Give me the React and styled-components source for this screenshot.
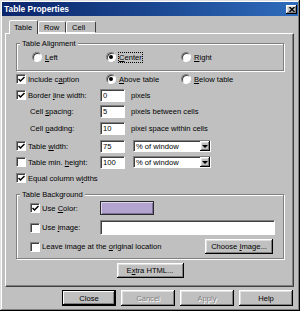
import React from "react";
import styled, { createGlobalStyle, css } from "styled-components";

const GlobalStyle = createGlobalStyle`
  html, body {
    margin: 0;
    padding: 0;
    background: #c0c0c0;
  }
  body {
    font-family: "Liberation Sans", Arial, sans-serif;
    font-size: 7.6px;
    color: #000;
  }
`;

const raised = css`
  box-shadow: inset -1px -1px 0 #000, inset 1px 1px 0 #fff,
    inset -2px -2px 0 #808080, inset 2px 2px 0 #dfdfdf;
`;

const sunken = css`
  border: 1px solid;
  border-color: #808080 #fff #fff #808080;
  box-shadow: inset 1px 1px 0 #404040;
  background: #fff;
`;

const Window = styled.div`
  width: 300px;
  height: 311px;
  box-sizing: border-box;
  padding: 2px;
  background: #c0c0c0;
  box-shadow: inset -1px -1px 0 #000, inset 1px 1px 0 #dfdfdf,
    inset -2px -2px 0 #808080, inset 2px 2px 0 #fff;
  display: flex;
  flex-direction: column;
`;

const TitleBar = styled.div`
  height: 14px;
  display: flex;
  align-items: center;
  justify-content: space-between;
  padding: 0 1px 0 2px;
  background: linear-gradient(90deg, #0a246a 0%, #1c4a94 55%, #2f6cbc 100%);
  color: #fff;
  font-weight: bold;
  font-size: 8.4px;
`;

const CloseBtn = styled.div`
  width: 11px;
  height: 9px;
  background: #c0c0c0;
  ${raised};
  display: flex;
  align-items: center;
  justify-content: center;
`;

const Body = styled.div`
  padding: 3px 4px 0 3px;
  display: flex;
  flex-direction: column;
`;

const Tabs = styled.div`
  display: flex;
  align-items: flex-end;
  height: 14px;
  padding-left: 4px;
  position: relative;
  z-index: 1;
`;

const Tab = styled.div`
  width: ${(p) => p.$w}px;
  height: ${(p) => (p.$active ? 14 : 12)}px;
  box-sizing: border-box;
  border: 1px solid;
  border-bottom: none;
  border-color: #fff #404040 transparent #fff;
  border-radius: 2px 2px 0 0;
  background: #c0c0c0;
  padding: ${(p) => (p.$active ? "2px 0 0 4px" : "1px 0 0 5px")};
  margin-bottom: ${(p) => (p.$active ? -1 : 0)}px;
  ${(p) =>
    !p.$active &&
    css`
      border-bottom: 1px solid #fff;
    `}
`;

const Panel = styled.div`
  height: 254px;
  box-sizing: border-box;
  border: 1px solid;
  border-color: #fff #404040 #404040 #fff;
  box-shadow: inset -1px -1px 0 #808080;
  padding: 3px 9px 0 10px;
  display: flex;
  flex-direction: column;
`;

const Group = styled.fieldset`
  margin: ${(p) => p.$mt || 0}px 0 0 0;
  padding: 0 0 ${(p) => p.$pb || 0}px 0;
  width: 268px;
  box-sizing: border-box;
  min-width: 0;
  border: 1px solid #808080;
  box-shadow: 1px 1px 0 #fff, inset 1px 1px 0 #fff;
`;

const Legend = styled.legend`
  margin-left: 3px;
  padding: 0 2px;
  line-height: 13px;
  background: #c0c0c0;
`;

const Row = styled.div`
  display: flex;
  align-items: center;
  height: ${(p) => p.$h || 14}px;
  margin-top: ${(p) => p.$mt || 0}px;
  justify-content: ${(p) => p.$justify || "flex-start"};
`;

const Lead = styled.div`
  flex: none;
  width: ${(p) => p.$w}px;
  display: flex;
  align-items: center;
  padding-left: ${(p) => p.$pl || 0}px;
  box-sizing: border-box;
`;

const Box = styled.span`
  flex: none;
  width: 10px;
  height: 10px;
  box-sizing: border-box;
  ${sunken};
  display: inline-flex;
  align-items: center;
  justify-content: center;
  margin-right: 2px;
`;

const Circle = styled.span`
  flex: none;
  width: 10px;
  height: 10px;
  box-sizing: border-box;
  border-radius: 50%;
  ${sunken};
  display: inline-flex;
  align-items: center;
  justify-content: center;
  margin-right: 3px;
  &::after {
    content: "";
    width: 4px;
    height: 4px;
    border-radius: 50%;
    background: ${(p) => (p.$on ? "#000" : "transparent")};
  }
`;

const Key = styled.span`
  text-decoration: underline;
`;

const Focus = styled.span`
  outline: 1px dotted #000;
  outline-offset: 0;
`;

const Field = styled.div`
  flex: none;
  width: ${(p) => p.$w}px;
  height: ${(p) => p.$h || 13}px;
  box-sizing: border-box;
  ${sunken};
  padding-left: 2px;
  display: flex;
  align-items: center;
`;

const Suffix = styled.span`
  margin-left: ${(p) => p.$ml || 6}px;
`;

const Select = styled.div`
  flex: none;
  width: 78px;
  height: 12px;
  margin-left: 8px;
  box-sizing: border-box;
  ${sunken};
  display: flex;
  align-items: center;
  padding-left: 2px;
  justify-content: space-between;
`;

const DropBtn = styled.span`
  width: 10px;
  height: 10px;
  background: #c0c0c0;
  ${raised};
  display: flex;
  align-items: center;
  justify-content: center;
`;

const Swatch = styled.div`
  flex: none;
  width: 54px;
  height: 14px;
  box-sizing: border-box;
  border: 1px solid #2a2a2a;
  background: #b3a3cf;
  box-shadow: inset 1px 1px 0 #ddd4ec, inset -1px -1px 0 #7e6e9e;
`;

const Button = styled.div`
  flex: none;
  width: ${(p) => p.$w}px;
  height: ${(p) => p.$h || 16}px;
  box-sizing: border-box;
  background: #c0c0c0;
  ${raised};
  display: flex;
  align-items: center;
  justify-content: center;
  ${(p) =>
    p.$default &&
    css`
      border: 1px solid #000;
      box-shadow: inset -1px -1px 0 #000, inset 1px 1px 0 #fff,
        inset -2px -2px 0 #808080;
    `}
  ${(p) =>
    p.$disabled &&
    css`
      color: #808080;
      text-shadow: 1px 1px 0 #fff;
    `}
`;

const Footer = styled.div`
  display: flex;
  justify-content: flex-end;
  gap: 5px;
  margin-top: 3px;
  padding-right: 1px;
`;

function Check({ on }) {
  return (
    <Box>
      {on && (
        <svg width="7" height="7" viewBox="0 0 7 7">
          <path d="M0.5 3 L2.5 5 L6.5 1" fill="none" stroke="#000" strokeWidth="1.5" />
        </svg>
      )}
    </Box>
  );
}

function Drop() {
  return (
    <Select>
      <span>% of window</span>
      <DropBtn>
        <svg width="6" height="5" viewBox="0 0 6 5">
          <path d="M0 1 H6 L3 4 Z" fill="#000" />
        </svg>
      </DropBtn>
    </Select>
  );
}

export default function App() {
  return (
    <Window>
      <GlobalStyle />
      <TitleBar>
        <span>Table Properties</span>
        <CloseBtn>
          <svg width="6" height="5" viewBox="0 0 6 5">
            <path d="M0.5 0 L5.5 5 M5.5 0 L0.5 5" stroke="#000" strokeWidth="1.4" />
          </svg>
        </CloseBtn>
      </TitleBar>
      <Body>
        <Tabs>
          <Tab $active $w={29}>Table</Tab>
          <Tab $w={28}>Row</Tab>
          <Tab $w={30}>Cell</Tab>
        </Tabs>
        <Panel>
          <Group $pb={6}>
            <Legend>Table Alignment</Legend>
            <Row>
              <Lead $w={89} $pl={15}>
                <Circle />
                <span><Key>L</Key>eft</span>
              </Lead>
              <Lead $w={75}>
                <Circle $on />
                <Focus><Key>C</Key>enter</Focus>
              </Lead>
              <Lead $w={80}>
                <Circle />
                <span><Key>R</Key>ight</span>
              </Lead>
            </Row>
          </Group>

          <Row $mt={1}>
            <Lead $w={90}>
              <Check on />
              <span>Include c<Key>a</Key>ption</span>
            </Lead>
            <Lead $w={75}>
              <Circle $on />
              <span><Key>A</Key>bove table</span>
            </Lead>
            <Lead $w={80}>
              <Circle />
              <span><Key>B</Key>elow table</span>
            </Lead>
          </Row>

          <Row $mt={2}>
            <Lead $w={84}>
              <Check on />
              <span>Border <Key>l</Key>ine width:</span>
            </Lead>
            <Field $w={25}>0</Field>
            <Suffix>pixels</Suffix>
          </Row>

          <Row $mt={2}>
            <Lead $w={84} $pl={14}>
              <span>Cell <Key>s</Key>pacing:</span>
            </Lead>
            <Field $w={25}>5</Field>
            <Suffix>pixels between cells</Suffix>
          </Row>

          <Row $mt={3}>
            <Lead $w={84} $pl={14}>
              <span>Cell <Key>p</Key>adding:</span>
            </Lead>
            <Field $w={25}>10</Field>
            <Suffix>pixel space within cells</Suffix>
          </Row>

          <Row $mt={4}>
            <Lead $w={84}>
              <Check on />
              <span>Table <Key>w</Key>idth:</span>
            </Lead>
            <Field $w={25}>75</Field>
            <Drop />
          </Row>

          <Row $mt={2}>
            <Lead $w={84}>
              <Check />
              <span>Table min. <Key>h</Key>eight:</span>
            </Lead>
            <Field $w={25}>100</Field>
            <Drop />
          </Row>

          <Row $mt={2}>
            <Lead $w={150}>
              <Check on />
              <span>Equal column w<Key>i</Key>dths</span>
            </Lead>
          </Row>

          <Group $mt={3} $pb={4}>
            <Legend>Table Background</Legend>
            <Row>
              <Lead $w={83} $pl={13}>
                <Check on />
                <span>Use <Key>C</Key>olor:</span>
              </Lead>
              <Swatch />
            </Row>
            <Row $mt={5} $h={15}>
              <Lead $w={83} $pl={13}>
                <Check />
                <span>Use <Key>i</Key>mage:</span>
              </Lead>
              <Field $w={175} $h={15} />
            </Row>
            <Row $mt={4} $h={15}>
              <Lead $w={188} $pl={13}>
                <Check />
                <span>Leave image at the <Key>o</Key>riginal location</span>
              </Lead>
              <Button $w={68} $h={15}>
                <span>Choose <Key>I</Key>mage...</span>
              </Button>
            </Row>
          </Group>

          <Row $mt={4} $h={15} $justify="center">
            <Button $w={67} $h={15}>
              <span>E<Key>x</Key>tra HTML...</span>
            </Button>
          </Row>
        </Panel>
        <Footer>
          <Button $w={54} $default>Close</Button>
          <Button $w={54} $disabled>Cancel</Button>
          <Button $w={54} $disabled>Apply</Button>
          <Button $w={54}>Help</Button>
        </Footer>
      </Body>
    </Window>
  );
}
